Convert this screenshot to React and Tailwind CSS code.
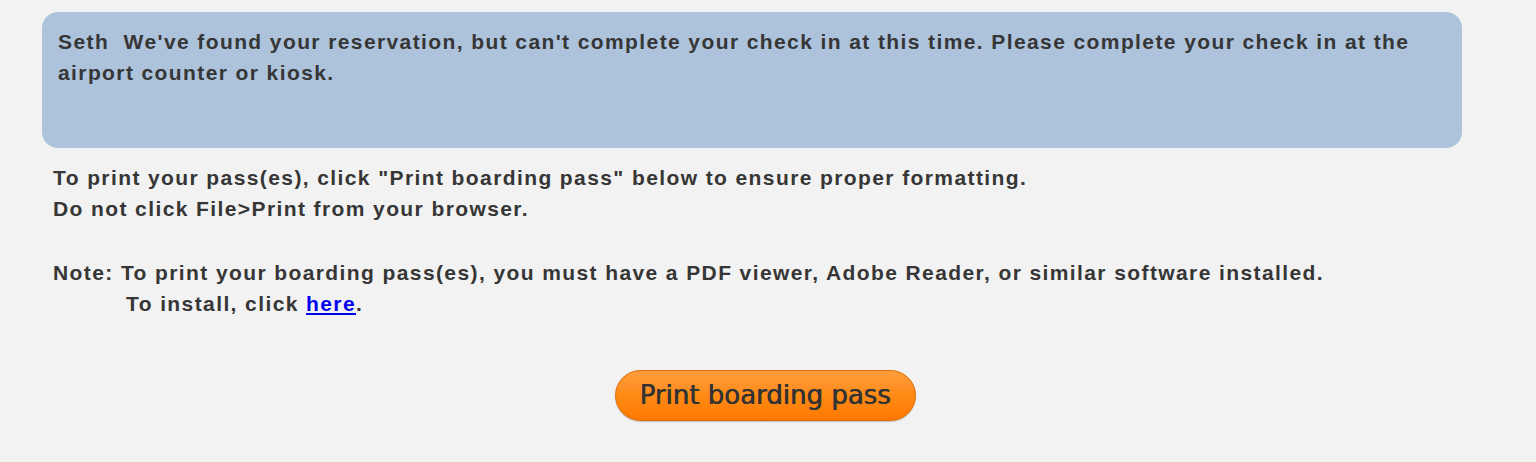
export default function App() {
  return (
    <div className="w-[1536px] h-[462px] bg-[#f2f2f2] overflow-hidden" style={{ fontFamily: '"Liberation Sans", Arial, sans-serif' }}>
      <div className="pl-[42px] pr-[74px] pt-[12px]">
        <div className="h-[136px] rounded-[16px] bg-[#adc3dc] pl-[16px] pr-[20px] pt-[14px] text-[21px] leading-[31px] font-bold tracking-[1.4px] text-[#363636]">
          Seth&nbsp; We've found your reservation, but can't complete your check in at this time. Please complete your check in at the airport counter or kiosk.
        </div>
      </div>
      <div className="pl-[53px] pt-[14px] text-[21px] leading-[31px] font-bold tracking-[1.4px] text-[#363636]">
        <div>To print your pass(es), click "Print boarding pass" below to ensure proper formatting.</div>
        <div>Do not click File&gt;Print from your browser.</div>
        <div className="h-[33px]" />
        <div>Note: To print your boarding pass(es), you must have a PDF viewer, Adobe Reader, or similar software installed.</div>
        <div className="pl-[73px]">To install, click <a href="#" className="text-[#0000ee] underline">here</a>.</div>
      </div>
      <div className="flex justify-center pt-[51px]">
        <button className="ml-[-6px] h-[51px] w-[301px] rounded-full border border-[#dc6a00] bg-gradient-to-b from-[#ff9d3c] via-[#ff8a14] to-[#ff7800] text-[26px] text-[#333333] shadow-[0_1px_1px_rgba(0,0,0,0.2)] [text-shadow:0.6px_0_0_#333333]" style={{ fontFamily: '"DejaVu Sans", Verdana, sans-serif' }}>
          Print boarding pass
        </button>
      </div>
    </div>
  );
}
